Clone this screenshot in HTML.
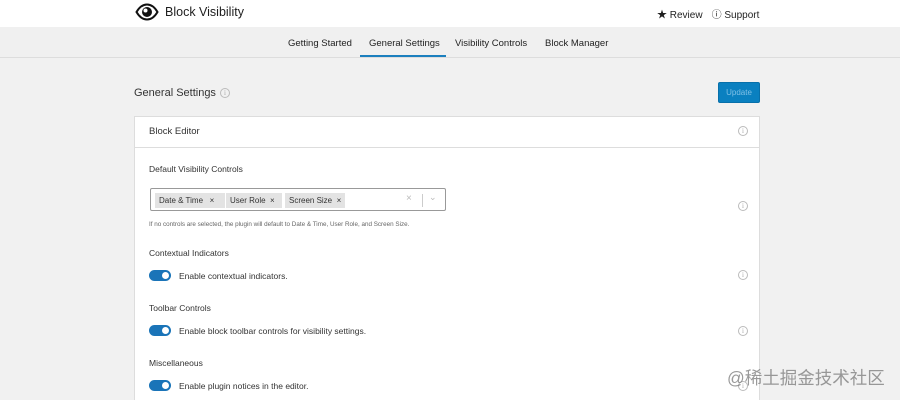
<!DOCTYPE html>
<html><head><meta charset="utf-8"><style>
*{box-sizing:border-box;margin:0;padding:0}
html{width:900px;height:400px;overflow:hidden}
body{width:900px;height:400px;overflow:hidden;background:#f1f1f1;font-family:"Liberation Sans","Noto Sans CJK SC",sans-serif;color:#1e1e1e;position:relative}
.top{position:absolute;left:0;top:0;width:900px;height:27px;background:#fff;box-shadow:0 1px 2px rgba(0,0,0,.06)}
.logo{position:absolute;left:135px;top:3px;display:flex;align-items:center;gap:6px;font-size:12.5px}
.links{position:absolute;left:657px;top:6px;font-size:10px;display:flex;gap:9px}
.nav{position:absolute;left:0;top:27px;width:900px;height:31px;border-bottom:1px solid #ddd;background:#f0f0f0}
.nav span{position:absolute;top:11px;font-size:9.5px;color:#222}
.ul{position:absolute;left:360px;top:55px;width:86px;height:2px;background:#1b7fbe}
h1{position:absolute;left:134px;top:87px;font-size:11px;font-weight:normal;color:#333}
.btn{position:absolute;left:718px;top:82px;width:42px;height:21px;background:#0a80c0;border:1px solid #0870aa;border-radius:2px;color:#7fc0e6;font-size:8px;text-align:center;line-height:19px}
.card{position:absolute;left:134px;top:116px;width:626px;height:284px;background:#fff;border:1px solid #ddd;border-bottom:none}
.ch{height:31px;border-bottom:1px solid #ddd;font-size:9.5px;padding:9px 0 0 14px;color:#333}
.i{position:absolute;width:10px;height:10px;border:1px solid #bbb;border-radius:50%;font-size:7px;color:#aaa;text-align:center;line-height:8px;font-family:"Liberation Serif",serif}
.lbl{position:absolute;left:14px;font-size:8.5px;color:#333}
.sel{position:absolute;left:15px;top:71px;width:296px;height:23px;border:1px solid #999;border-radius:2px}
.tag{position:absolute;top:4px;height:15px;background:#e3e3e3;font-size:8px;line-height:15px;padding-left:4px;color:#333}
.help{position:absolute;left:14px;top:104px;font-size:6.3px;color:#666}
.tg{position:absolute;left:14px;width:22px;height:11px;border-radius:6px;background:#1a74b8}
.tg:after{content:"";position:absolute;right:2px;top:2px;width:7px;height:7px;border-radius:50%;background:#fff}
.tt{position:absolute;left:44px;font-size:8.5px;color:#333}
.wm{position:absolute;left:727px;top:365px;font-size:17.5px;color:rgba(120,120,120,.75)}
</style></head><body>
<div class="top">
 <div class="logo"><svg width="24" height="18" viewBox="0 0 24 18"><path d="M1.5 9C5 3 9 1.5 12 1.5S19 3 22.5 9C19 15 15 16.5 12 16.5S5 15 1.5 9Z" fill="none" stroke="#111" stroke-width="2"/><circle cx="12" cy="9" r="5" fill="#111"/><circle cx="10.5" cy="7.5" r="2" fill="#fff"/></svg><span>Block Visibility</span></div>
 <div class="links"><span>★ Review</span><span>ⓘ Support</span></div>
</div>
<div class="nav">
 <span style="left:288px">Getting Started</span>
 <span style="left:369px">General Settings</span>
 <span style="left:455px">Visibility Controls</span>
 <span style="left:545px">Block Manager</span>
</div>
<div class="ul"></div>
<h1>General Settings</h1>
<span class="i" style="left:220px;top:88px">i</span>
<div class="btn">Update</div>
<div class="card">
 <div class="ch">Block Editor</div>
 <span class="i" style="left:603px;top:9px">i</span>
 <div class="lbl" style="top:47px">Default Visibility Controls</div>
 <div class="sel">
  <div class="tag" style="left:4px;width:70px">Date &amp; Time &nbsp; ×</div>
  <div class="tag" style="left:75px;width:56px">User Role &nbsp;×</div>
  <div class="tag" style="left:134px;width:60px">Screen Size &nbsp;×</div>
  <span style="position:absolute;left:255px;top:4px;font-size:10px;color:#bbb">×</span>
  <span style="position:absolute;left:271px;top:5px;width:1px;height:13px;background:#ccc"></span>
  <span style="position:absolute;left:278px;top:3px;font-size:9px;color:#bbb">⌄</span>
 </div>
 <span class="i" style="left:603px;top:84px">i</span>
 <div class="help">If no controls are selected, the plugin will default to Date &amp; Time, User Role, and Screen Size.</div>
 <div class="lbl" style="top:131px">Contextual Indicators</div>
 <div class="tg" style="top:153px"></div><div class="tt" style="top:154px">Enable contextual indicators.</div>
 <span class="i" style="left:603px;top:153px">i</span>
 <div class="lbl" style="top:186px">Toolbar Controls</div>
 <div class="tg" style="top:208px"></div><div class="tt" style="top:209px">Enable block toolbar controls for visibility settings.</div>
 <span class="i" style="left:603px;top:209px">i</span>
 <div class="lbl" style="top:241px">Miscellaneous</div>
 <div class="tg" style="top:263px"></div><div class="tt" style="top:264px">Enable plugin notices in the editor.</div>
 <span class="i" style="left:603px;top:264px">i</span>
</div>
<div class="wm">@稀土掘金技术社区</div>
</body></html>
